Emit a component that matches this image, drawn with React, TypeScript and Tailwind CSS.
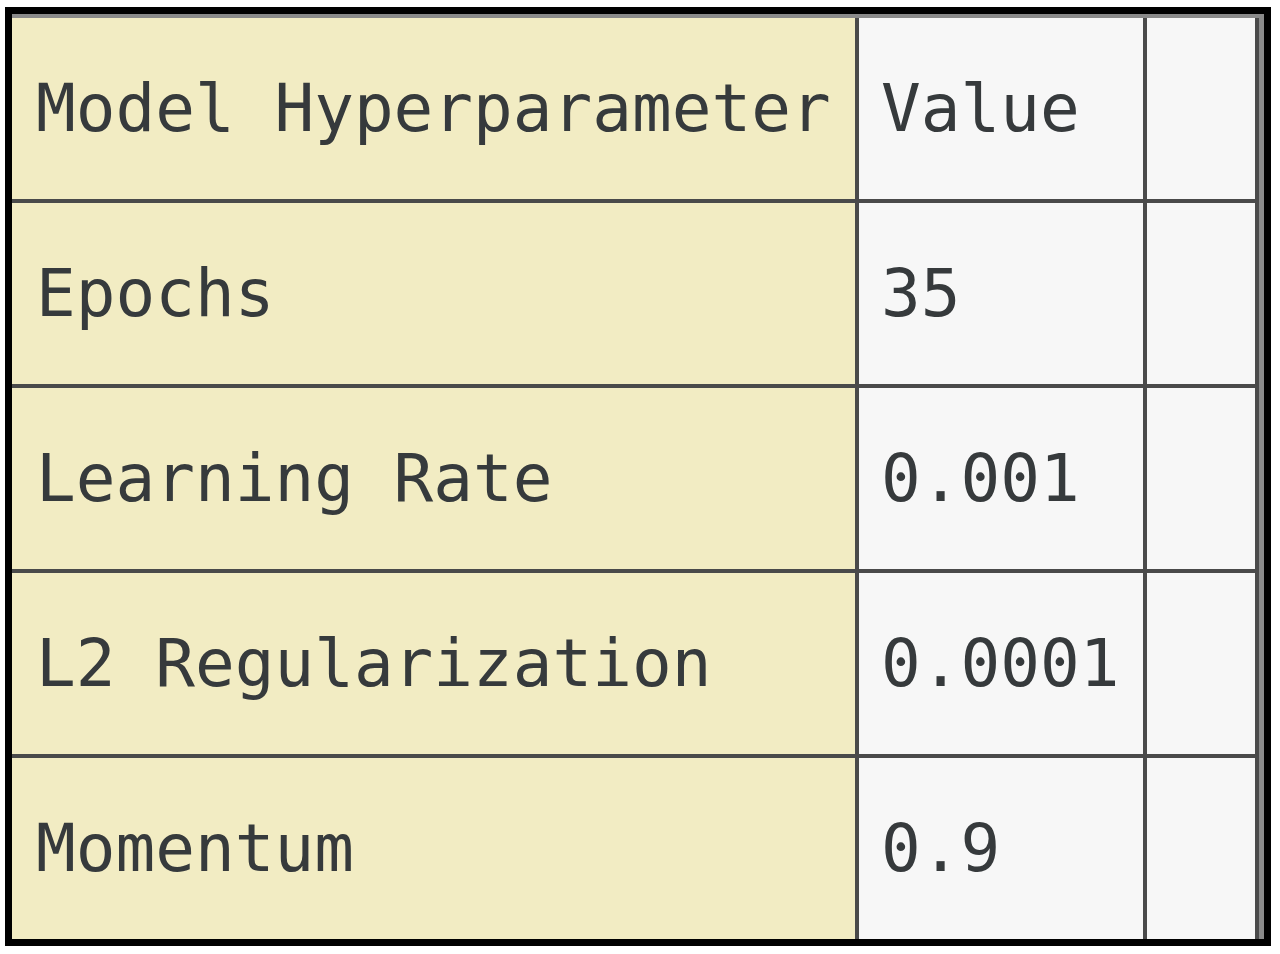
import React from 'react';

const rows = [
  { name: 'Model Hyperparameter', value: 'Value' },
  { name: 'Epochs', value: '35' },
  { name: 'Learning Rate', value: '0.001' },
  { name: 'L2 Regularization', value: '0.0001' },
  { name: 'Momentum', value: '0.9' },
];

const App: React.FC = () => {
  return (
    <div className="w-[1280px] h-[954px] bg-white pl-[5px] pt-[7px]">
      <div className="w-[1266px] border-[7px] border-black bg-black">
        <div className="border-t-4 border-r-[5px] border-[#8a8a8a]">
          <div
            className="grid grid-cols-[843px_284px_108px] auto-rows-[181px] gap-[4px] bg-[#4a4a4a] text-[#363a3c] text-[66px] leading-none"
            style={{ fontFamily: '"DejaVu Sans Mono", monospace' }}
          >
            {rows.map((row) => (
              <React.Fragment key={row.name}>
                <div className="flex items-center bg-[#f2ecc3] pl-[24px]">{row.name}</div>
                <div className="flex items-center bg-[#f7f7f7] pl-[22px]">{row.value}</div>
                <div className="bg-[#f7f7f7]"></div>
              </React.Fragment>
            ))}
          </div>
        </div>
      </div>
    </div>
  );
};

export default App;
